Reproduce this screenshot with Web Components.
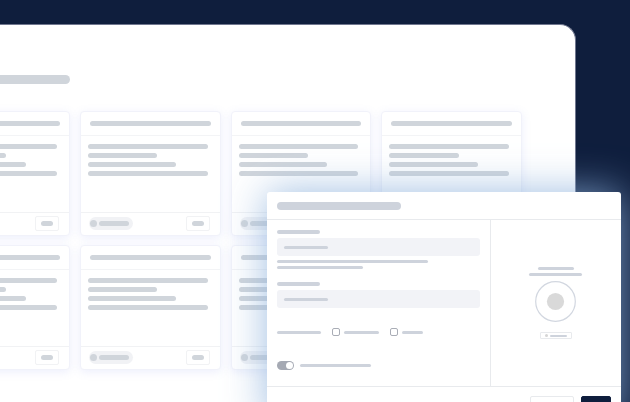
<!DOCTYPE html>
<html lang="en">
<head>
<meta charset="utf-8">
<meta name="viewport" content="width=device-width, initial-scale=1">
<title>Dashboard</title>
<style>
    body {
        margin: 0;
        height: 100vh;
        overflow: hidden;
        position: relative;
        background: #0f1e3d;
        font-family: "Liberation Sans", sans-serif;
    }
</style>
</head>
<body>
<board-panel>
    <skeleton-bar slot="title" style="--bar-width: 141px; --bar-height: 9px"></skeleton-bar>
    <board-card></board-card>
    <board-card></board-card>
    <board-card></board-card>
    <board-card></board-card>
    <board-card></board-card>
    <board-card></board-card>
    <board-card></board-card>
    <board-card></board-card>
</board-panel>

<settings-dialog>
    <text-field>
        <skeleton-bar slot="help" style="--bar-width: 151px; --bar-height: 3px"></skeleton-bar>
        <skeleton-bar slot="help" style="--bar-width: 86px; --bar-height: 3px"></skeleton-bar>
    </text-field>
    <text-field></text-field>
    <option-row></option-row>
    <toggle-row></toggle-row>
    <profile-preview slot="aside"></profile-preview>
</settings-dialog>

<script>
class SkeletonBar extends HTMLElement {
    constructor() {
        super();
        this.attachShadow({mode: "open"}).innerHTML = `
            <style>
                :host {
                    display: block;
                    flex: none;
                    width: var(--bar-width, 100%);
                    height: var(--bar-height, 5px);
                    border-radius: 8px;
                    background: var(--bar-color, #d0d5db);
                }
            </style>`;
    }
}

class BoardPanel extends HTMLElement {
    constructor() {
        super();
        this.attachShadow({mode: "open"}).innerHTML = `
            <style>
                :host {
                    display: block;
                    box-sizing: border-box;
                    height: 100vh;
                    padding-top: 24px;
                    padding-right: 54px;
                }

                main {
                    box-sizing: border-box;
                    height: 100%;
                    overflow: hidden;
                    padding: 50px 53px 0 0;
                    border: 1px solid #70778f;
                    border-width: 1px 1px 0 0;
                    border-top-right-radius: 16px;
                    background: #fff;
                }

                /* the board is scrolled, so its first column starts off screen */
                .board {
                    margin-left: -71px;
                }

                .cards {
                    display: grid;
                    grid-template-columns: repeat(4, 1fr);
                    gap: 9px 10px;
                    padding-top: 27px;
                }
            </style>
            <main>
                <div class="board">
                    <slot name="title"></slot>
                    <div class="cards"><slot></slot></div>
                </div>
            </main>`;
    }
}

class BoardCard extends HTMLElement {
    constructor() {
        super();
        this.attachShadow({mode: "open"}).innerHTML = `
            <style>
                :host {
                    display: block;
                    border: 1px solid #f1f2fa;
                    border-radius: 4px;
                    background: #fff;
                    box-shadow: 0 2px 10px rgba(110, 125, 235, 0.13);
                }

                header {
                    padding: 9px;
                    border-bottom: 1px solid #f3f4f6;
                }

                .lines {
                    display: grid;
                    align-content: start;
                    gap: 4px;
                    min-height: 68px;
                    padding: 8px 12px 0 7px;
                }

                footer {
                    display: flex;
                    align-items: center;
                    justify-content: space-between;
                    padding: 3px 10px 4px 8px;
                    border-top: 1px solid #f1f2f4;
                }

                .tag {
                    display: flex;
                    align-items: center;
                    gap: 2px;
                    padding: 3px 4px 3px 1px;
                    border-radius: 8px;
                    background: #f1f2f5;
                }

                .dot {
                    width: 7px;
                    height: 7px;
                    border-radius: 50%;
                    background: #d0d5db;
                }

                button {
                    display: flex;
                    align-items: center;
                    justify-content: center;
                    box-sizing: border-box;
                    width: 24px;
                    height: 15px;
                    padding: 0;
                    border: 1px solid #f1f2f4;
                    border-radius: 2px;
                    background: #fff;
                }
            </style>
            <header><skeleton-bar></skeleton-bar></header>
            <div class="lines">
                <skeleton-bar></skeleton-bar>
                <skeleton-bar style="--bar-width: 58%"></skeleton-bar>
                <skeleton-bar style="--bar-width: 74%"></skeleton-bar>
                <skeleton-bar></skeleton-bar>
            </div>
            <footer>
                <span class="tag">
                    <span class="dot"></span>
                    <skeleton-bar style="--bar-width: 30px"></skeleton-bar>
                </span>
                <button type="button" aria-label="Open">
                    <skeleton-bar style="--bar-width: 12px"></skeleton-bar>
                </button>
            </footer>`;
    }
}

class SettingsDialog extends HTMLElement {
    constructor() {
        super();
        this.attachShadow({mode: "open"}).innerHTML = `
            <style>
                :host {
                    --bar-color: #ced3dc;
                    position: absolute;
                    top: 192px;
                    left: 267px;
                    right: 9px;
                    border-radius: 3px;
                    background: #fff;
                    box-shadow: 0 0 40px rgba(141, 177, 220, 0.85);
                }

                header {
                    padding: 10px 10px 9px;
                    border-bottom: 1px solid #e8eaed;
                }

                .content {
                    display: grid;
                    grid-template-columns: 22fr 13fr;
                }

                .form {
                    padding: 10px 10px 16px;
                }

                .aside {
                    display: grid;
                    align-content: center;
                    border-left: 1px solid #e8eaed;
                }

                footer {
                    display: flex;
                    justify-content: flex-end;
                    gap: 7px;
                    padding: 9px 10px 10px;
                    border-top: 1px solid #e8eaed;
                }

                button {
                    box-sizing: border-box;
                    width: 44px;
                    height: 14px;
                    padding: 0;
                    border: 1px solid #e8eaed;
                    border-radius: 2px;
                    background: #fff;
                }

                .save {
                    width: 30px;
                    border-color: #0f1e3d;
                    background: #0f1e3d;
                }
            </style>
            <header>
                <skeleton-bar style="--bar-width: 124px; --bar-height: 8px"></skeleton-bar>
            </header>
            <div class="content">
                <div class="form"><slot></slot></div>
                <div class="aside"><slot name="aside"></slot></div>
            </div>
            <footer>
                <button type="button" aria-label="Cancel"></button>
                <button type="button" class="save" aria-label="Save"></button>
            </footer>`;
    }
}

class TextField extends HTMLElement {
    constructor() {
        super();
        this.attachShadow({mode: "open"}).innerHTML = `
            <style>
                :host {
                    display: block;
                    margin-bottom: 13px;
                }

                label {
                    display: block;
                    margin-bottom: 4px;
                }

                /* the input and its placeholder bar share one cell */
                .box {
                    display: grid;
                    align-items: center;
                }

                .box > * {
                    grid-area: 1 / 1;
                }

                .box skeleton-bar {
                    margin-left: 7px;
                    pointer-events: none;
                }

                input {
                    box-sizing: border-box;
                    width: 100%;
                    height: 18px;
                    padding: 0 7px;
                    border: 0;
                    border-radius: 3px;
                    background: #f2f3f7;
                    font: 8px "Liberation Sans", sans-serif;
                }

                .help {
                    display: grid;
                    gap: 3px;
                    padding-top: 4px;
                }
            </style>
            <label for="field" aria-label="Field">
                <skeleton-bar style="--bar-width: 43px; --bar-height: 4px"></skeleton-bar>
            </label>
            <div class="box">
                <input id="field" type="text">
                <skeleton-bar style="--bar-width: 44px; --bar-height: 3px"></skeleton-bar>
            </div>
            <div class="help"><slot name="help"></slot></div>`;
    }
}

class OptionRow extends HTMLElement {
    constructor() {
        super();
        this.attachShadow({mode: "open"}).innerHTML = `
            <style>
                :host {
                    --bar-height: 3px;
                    display: flex;
                    align-items: center;
                    gap: 11px;
                    padding-top: 3px;
                }

                label {
                    display: flex;
                    align-items: center;
                    gap: 4px;
                }

                input {
                    appearance: none;
                    box-sizing: border-box;
                    width: 8px;
                    height: 8px;
                    margin: 0;
                    border: 1px solid #a9adb6;
                    border-radius: 2px;
                    background: #fff;
                }

                input:checked {
                    background: #a9adb6;
                }
            </style>
            <skeleton-bar style="--bar-width: 44px"></skeleton-bar>
            <label>
                <input type="checkbox" aria-label="First option">
                <skeleton-bar style="--bar-width: 35px"></skeleton-bar>
            </label>
            <label>
                <input type="checkbox" aria-label="Second option">
                <skeleton-bar style="--bar-width: 21px"></skeleton-bar>
            </label>`;
    }
}

class ToggleRow extends HTMLElement {
    constructor() {
        super();
        this.attachShadow({mode: "open"}).innerHTML = `
            <style>
                :host {
                    display: block;
                    padding-top: 25px;
                }

                label {
                    display: flex;
                    align-items: center;
                    gap: 6px;
                }

                input {
                    appearance: none;
                    display: flex;
                    box-sizing: border-box;
                    width: 17px;
                    height: 9px;
                    margin: 0;
                    padding: 1px;
                    border-radius: 8px;
                    background: #a5a9b3;
                }

                input::before {
                    content: "";
                    width: 7px;
                    height: 7px;
                    border-radius: 50%;
                    background: #fff;
                }

                input:checked::before {
                    margin-left: auto;
                }
            </style>
            <label>
                <input type="checkbox" role="switch" aria-label="Enable" checked>
                <skeleton-bar style="--bar-width: 71px; --bar-height: 3px"></skeleton-bar>
            </label>`;
    }
}

class ProfilePreview extends HTMLElement {
    constructor() {
        super();
        this.attachShadow({mode: "open"}).innerHTML = `
            <style>
                :host {
                    --bar-height: 3px;
                    display: grid;
                    justify-items: center;
                    gap: 3px;
                }

                svg {
                    display: block;
                    margin: 2px 0 7px;
                }

                button {
                    display: flex;
                    align-items: center;
                    justify-content: center;
                    gap: 2px;
                    box-sizing: border-box;
                    width: 32px;
                    height: 7px;
                    padding: 0;
                    border: 1px solid #e8eaed;
                    border-radius: 1px;
                    background: #fff;
                }

                .dot {
                    width: 3px;
                    height: 3px;
                    border-radius: 50%;
                    background: #d5d5d5;
                }
            </style>
            <skeleton-bar style="--bar-width: 36px"></skeleton-bar>
            <skeleton-bar style="--bar-width: 53px"></skeleton-bar>
            <svg width="41" height="41" viewBox="0 0 41 41" aria-hidden="true">
                <circle cx="20.5" cy="20.5" r="19.8" fill="none" stroke="#d2d7e0" stroke-width="1.2"/>
                <circle cx="20.5" cy="20.5" r="8.6" fill="#d9d9d9"/>
            </svg>
            <button type="button" aria-label="Upload">
                <span class="dot"></span>
                <skeleton-bar style="--bar-width: 17px; --bar-height: 2px"></skeleton-bar>
            </button>`;
    }
}

customElements.define("skeleton-bar", SkeletonBar);
customElements.define("board-panel", BoardPanel);
customElements.define("board-card", BoardCard);
customElements.define("settings-dialog", SettingsDialog);
customElements.define("text-field", TextField);
customElements.define("option-row", OptionRow);
customElements.define("toggle-row", ToggleRow);
customElements.define("profile-preview", ProfilePreview);
</script>
</body>
</html>
